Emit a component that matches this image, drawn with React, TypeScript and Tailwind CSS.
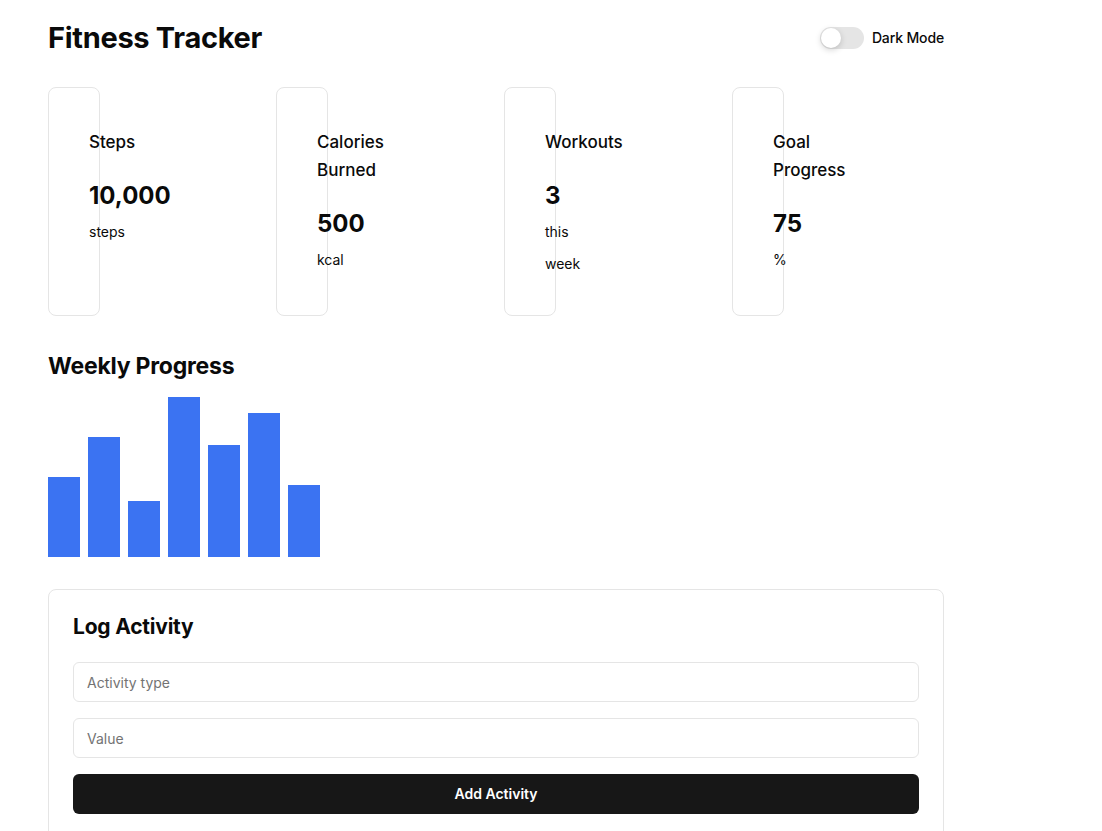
import { useState } from "react";

const cards = [
  { title: "Steps", value: "10,000", unit: "steps" },
  { title: "Calories Burned", value: "500", unit: "kcal" },
  { title: "Workouts", value: "3", unit: "this week" },
  { title: "Goal Progress", value: "75", unit: "%" },
];

const weekly = [80, 120, 56, 160, 112, 144, 72];

export default function App() {
  const [dark, setDark] = useState(false);
  const [activity, setActivity] = useState("");
  const [value, setValue] = useState("");

  return (
    <div className="min-h-screen bg-white px-12 pt-5 text-[#0a0a0a] font-['Inter','Noto_Sans',sans-serif]">
      <div className="w-[896px]">
        {/* Header */}
        <div className="flex items-center justify-between h-9 mb-[31px]">
          <h1 className="text-[29px] font-bold tracking-[-0.01em] leading-9">Fitness Tracker</h1>
          <div className="flex items-center gap-2">
            <button
              onClick={() => setDark(!dark)}
              className="relative w-11 h-[22px] rounded-full bg-[#e5e5e5]"
            >
              <span
                className={
                  "absolute top-[1px] left-[1px] w-5 h-5 rounded-full bg-white shadow-[0_2px_6px_rgba(0,0,0,0.18)] " +
                  (dark ? "translate-x-[22px]" : "")
                }
              />
            </button>
            <span className="text-sm font-medium tracking-[-0.01em]">Dark Mode</span>
          </div>
        </div>

        {/* Stat cards */}
        <div className="grid grid-cols-4 gap-4">
          {cards.map((c) => (
            <div
              key={c.title}
              className="w-[52px] rounded-lg border border-[#e5e5e5] pl-10 pr-0 pt-10 pb-[35px]"
            >
              <h3 className="text-[17px] font-medium leading-7">{c.title}</h3>
              <div className="mt-6 text-2xl font-bold leading-8 whitespace-nowrap">{c.value}</div>
              <p className="mt-1 text-sm leading-8">{c.unit}</p>
            </div>
          ))}
        </div>

        {/* Weekly progress */}
        <h2 className="mt-[34px] mb-[15px] text-[23px] font-bold leading-8 tracking-[-0.01em]">Weekly Progress</h2>
        <div className="flex items-end gap-2 h-40">
          {weekly.map((h, i) => (
            <div key={i} className="w-8 bg-[#3b73f2]" style={{ height: h }} />
          ))}
        </div>

        {/* Log activity */}
        <div className="mt-8 rounded-lg border border-[#e5e5e5] p-6">
          <h2 className="text-[21px] font-bold leading-[26px] tracking-[-0.01em] mb-[22px]">Log Activity</h2>
          <div className="flex flex-col gap-4">
            <input
              value={activity}
              onChange={(e) => setActivity(e.target.value)}
              placeholder="Activity type"
              className="h-10 rounded-md border border-[#e5e5e5] px-[13px] text-sm placeholder:text-[#737373] outline-none"
            />
            <input
              value={value}
              onChange={(e) => setValue(e.target.value)}
              placeholder="Value"
              className="h-10 rounded-md border border-[#e5e5e5] px-[13px] text-sm placeholder:text-[#737373] outline-none"
            />
            <button className="h-10 rounded-md bg-[#171717] text-white text-sm font-semibold">
              Add Activity
            </button>
          </div>
        </div>
      </div>
    </div>
  );
}
